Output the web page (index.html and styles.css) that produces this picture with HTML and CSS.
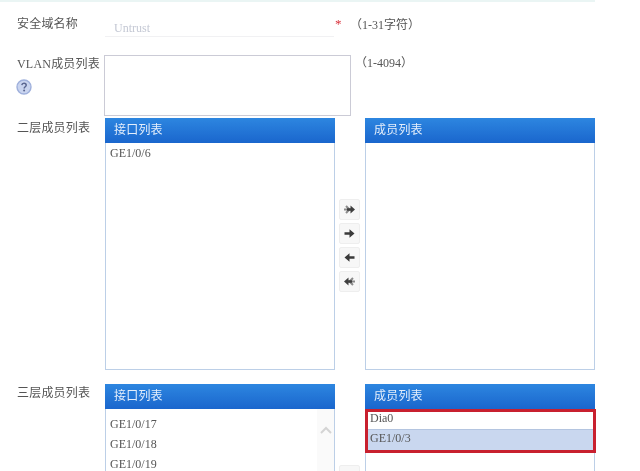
FILE: index.html
```html
<!DOCTYPE html>
<html lang="zh">
<head>
<meta charset="utf-8">
<title>安全域</title>
<link rel="stylesheet" href="styles.css">
</head>
<body>
<div class="topline"></div>
<form class="form">
  <div class="row row-name">
    <div class="label">安全域名称</div>
    <div class="field inline">
      <input class="text" value="Untrust" disabled>
      <span class="req">*</span>
      <span class="hint">（1-31字符）</span>
    </div>
  </div>
  <div class="row row-vlan">
    <div class="label">VLAN成员列表
      <svg class="help" width="16" height="16" viewBox="0 0 16 16"><circle cx="8" cy="8" r="7" fill="#c9d4ef" stroke="#9fb0dc" stroke-width="1.4"/><path d="M5.800 6.200C6 4.800 7 4.300 8 4.300c1.300 0 2.200.8 2.200 1.900 0 1.500-2 1.600-2 3.200" fill="none" stroke="#5a6690" stroke-width="1.500"/><circle cx="8.100" cy="11.600" r="1" fill="#5a6690"/></svg>
    </div>
    <div class="field inline">
      <div class="area"></div>
      <span class="hint hint-vlan">（1-4094）</span>
    </div>
  </div>
  <div class="row row-l2">
    <div class="label">二层成员列表</div>
    <div class="transfer">
      <div class="list"><div class="head">接口列表</div><div class="body"><div class="item">GE1/0/6</div></div></div>
      <div class="moves">
        <button class="move" type="button"><svg width="13" height="11" viewBox="0 0 13 11"><path d="M1 5.500h3M3 2l3.500 3.500L3 9" fill="none" stroke="#8b8b8b" stroke-width="2"/><path d="M4 4.200h3.500V1.500l4.500 4-4.500 4V6.800H4z" fill="#3f3f3f"/></svg></button>
        <button class="move" type="button"><svg width="13" height="11" viewBox="0 0 13 11"><path d="M1.500 4.200h5V1.200l5 4.300-5 4.300v-3h-5z" fill="#3a3a3a"/></svg></button>
        <button class="move" type="button"><svg width="13" height="11" viewBox="0 0 13 11"><path d="M11.500 4.200h-5V1.200l-5 4.300 5 4.300v-3h5z" fill="#3a3a3a"/></svg></button>
        <button class="move" type="button"><svg width="13" height="11" viewBox="0 0 13 11"><path d="M12 5.500H9M10 2L6.500 5.500 10 9" fill="none" stroke="#8b8b8b" stroke-width="2"/><path d="M9 4.200H5.500V1.500L1 5.500l4.500 4V6.800H9z" fill="#3f3f3f"/></svg></button>
      </div>
      <div class="list"><div class="head">成员列表</div><div class="body"></div></div>
    </div>
  </div>
  <div class="row row-l3">
    <div class="label">三层成员列表</div>
    <div class="transfer">
      <div class="list"><div class="head">接口列表</div>
        <div class="body body-scroll">
          <div class="items">
            <div class="item">GE1/0/17</div>
            <div class="item">GE1/0/18</div>
            <div class="item">GE1/0/19</div>
          </div>
          <div class="scrollbar"><svg width="14" height="8" viewBox="0 0 14 8"><path d="M2 7l5-5 5 5" fill="none" stroke="#d4d4d4" stroke-width="2"/></svg></div>
        </div>
      </div>
      <div class="moves moves-l3"><button class="move" type="button"></button></div>
      <div class="list"><div class="head">成员列表</div>
        <div class="body">
          <div class="marked">
            <div class="item item-member">Dia0</div>
            <div class="item item-member selected">GE1/0/3</div>
          </div>
        </div>
      </div>
    </div>
  </div>
</form>
</body>
</html>
```
FILE: styles.css
```css
html, body {
  margin: 0;
  height: 471px;
  overflow: hidden;
  background: #fff;
}
body {
  font-family: "Liberation Serif", "Noto Sans CJK SC", serif;
  font-size: 12px;
  color: #555;
}
.topline {
  width: 595px;
  height: 2px;
  background: #eaf5f4;
}
.form {
  display: flex;
  flex-direction: column;
  filter: blur(0.35px);
}
.row {
  display: grid;
  grid-template-columns: 88px 1fr;
  padding-left: 17px;
}
.label {
  font-size: 12px;
  line-height: 16px;
  letter-spacing: .2px;
  color: #555;
  white-space: nowrap;
}
.inline {
  display: flex;
  align-items: flex-start;
}
.row-name { padding-top: 15px; height: 36px; }
.row-name .label { margin-top: -1px; }
.row-vlan { height: 63px; margin-top: 2px; }
.row-vlan .label { padding-top: 1px; }
.row-l2 { height: 252px; }
.row-l2 .label { padding-top: 2px; }
.row-l3 { margin-top: 14px; }
.row-l3 .label { padding-top: 1px; }
.text {
  width: 229px;
  height: 19px;
  margin: 1px 0 0;
  padding: 2px 9px 0;
  box-sizing: border-box;
  border: 0;
  border-bottom: 1px solid #f1f1f3;
  background: #fff;
  font: 12px "Liberation Serif", serif;
  color: #c4c8d4;
}
.req {
  color: #d8303a;
  margin-left: 1px;
  width: 11px;
  font-size: 13px;
  line-height: 14px;
}
.hint {
  line-height: 16px;
  color: #555;
  margin-left: 4px;
}
.hint-vlan { margin-left: 0; }
.area {
  width: 245px;
  height: 59px;
  border: 1px solid #cbcbd6;
  margin-left: -1px;
  margin-right: 4px;
  background: #fff;
}
.help {
  display: block;
  margin-top: 7px;
  margin-left: -1px;
}
.transfer {
  display: grid;
  grid-template-columns: 230px 30px 230px;
}
.list {
  display: flex;
  flex-direction: column;
  height: 252px;
  box-sizing: border-box;
  border: 1px solid #bccfe7;
  border-top: 0;
}
.head {
  height: 25px;
  margin: 0 -1px;
  padding-left: 9px;
  flex: none;
  box-sizing: border-box;
  background: linear-gradient(#2d86e0, #1a66cd);
  color: #e4eefb;
  font-size: 12px;
  line-height: 25px;
  letter-spacing: .2px;
}
.body {
  flex: 1;
  min-height: 0;
}
.item {
  height: 20px;
  line-height: 20px;
  padding-left: 4px;
  font-size: 12px;
  color: #555;
}
.moves {
  display: flex;
  flex-direction: column;
  gap: 3px;
  padding: 81px 0 0 4px;
}
.move {
  width: 21px;
  height: 21px;
  padding: 0;
  display: flex;
  align-items: center;
  justify-content: center;
  box-sizing: border-box;
  border: 1px solid #eeeeee;
  border-radius: 2px;
  background: #f7f7f7;
}
.body-scroll {
  display: flex;
  justify-content: space-between;
}
.items { padding-top: 5px; }
.scrollbar {
  width: 17px;
  height: 87px;
  display: flex;
  justify-content: center;
  padding-top: 17px;
  box-sizing: border-box;
  background: #fafafa;
}
.marked {
  margin: 0 -1px;
  outline: 3px solid #c8202f;
  outline-offset: -3px;
  padding: 0 3px 3px;
  width: 231px;
  box-sizing: border-box;
}
.item-member {
  padding-left: 2px;
  line-height: 19px;
}
.selected {
  background: #c9d7ef;
  border-top: 1px solid #b4c5e0;
  height: 20px;
  line-height: 17px;
}
```
